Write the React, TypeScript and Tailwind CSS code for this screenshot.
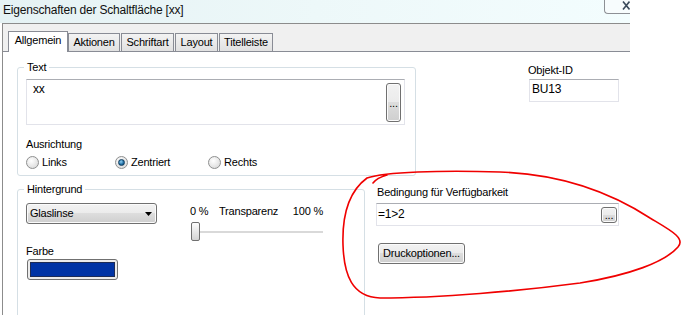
import type { ReactNode } from 'react';

const btn =
  'rounded-[3px] border border-[#707070] bg-[linear-gradient(#f2f2f2_0%,#ebebeb_50%,#dddddd_50%,#cfcfcf_100%)] shadow-[inset_0_0_0_1px_#fbfbfb]';

function Radio({ checked = false }: { checked?: boolean }) {
  return (
    <span className="flex h-[13px] w-[13px] items-center justify-center rounded-full border border-[#8e8f8f] bg-[radial-gradient(circle_at_40%_35%,#ffffff,#dcdcdc_80%)]">
      {checked && (
        <span className="h-[7px] w-[7px] rounded-full border border-[#0f3c5e] bg-[radial-gradient(circle_at_40%_35%,#8fd0f4,#1d6ba0_60%,#0d3f66)]" />
      )}
    </span>
  );
}

function RadioItem({ label, checked, width }: { label: string; checked?: boolean; width: string }) {
  return (
    <div className={`flex items-center gap-[3px] ${width}`}>
      <Radio checked={checked} />
      <span>{label}</span>
    </div>
  );
}

function Tab({ children, active = false, width }: { children: ReactNode; active?: boolean; width: string }) {
  if (active) {
    return (
      <div
        className={`relative -mb-px flex h-[21px] justify-center border border-b-0 border-[#898c95] bg-white pt-[2px] ${width}`}
      >
        {children}
      </div>
    );
  }
  return (
    <div
      className={`mr-[1px] flex h-[18px] justify-center border border-b-0 border-[#898c95] bg-linear-to-b from-[#f3f3f3] to-[#e1e1e1] pt-[2px] ${width}`}
    >
      {children}
    </div>
  );
}

export default function App() {
  return (
    <div className="relative h-[315px] w-[681px] overflow-hidden bg-white font-['Liberation_Sans',Arial,sans-serif] text-[11px] leading-[13px] tracking-[-0.2px] text-black">
      <div className="flex h-full w-[630px] flex-col">
        {/* title bar */}
        <div className="flex h-[23px] shrink-0 items-start bg-linear-to-r from-[#e5f2f4] via-[#edf8f9] to-[#f3fdfe]">
          <span className="pl-[3px] pt-[3px] text-[12px] leading-[14px] text-[#101010]">
            Eigenschaften der Schaltfläche [xx]
          </span>
          <div className="ml-auto flex h-[14px] w-[26px] items-start justify-end overflow-hidden rounded-bl-[4px] border-b border-l border-[#8d9095] bg-[#f7fcfd]">
            <svg width="8" height="9" viewBox="0 0 8 9" className="mt-[1px]">
              <path d="M1 0.5 L7.5 8.5 M7.5 0.5 L1 8.5" stroke="#3b4b5c" strokeWidth="1.6" fill="none" />
            </svg>
          </div>
        </div>

        {/* client area */}
        <div className="ml-[2px] flex min-h-0 flex-1 flex-col border-l border-t border-[#8c8c8c] bg-[#f0f0f0]">
          <div className="flex shrink-0 items-end border-b border-[#898c95] pl-[5px] pt-[7px]">
            <Tab active width="w-[60px]">Allgemein</Tab>
            <Tab width="w-[52px]">Aktionen</Tab>
            <Tab width="w-[53px]">Schriftart</Tab>
            <Tab width="w-[43px]">Layout</Tab>
            <Tab width="w-[54px]">Titelleiste</Tab>
          </div>

          <div className="flex min-h-0 flex-1 flex-col overflow-hidden bg-white pl-[14px] pt-[9px]">
            {/* row 1 */}
            <div className="flex shrink-0 items-start">
              <fieldset className="w-[399px] rounded-[3px] border border-[#d5dfe5] pb-[6px] pl-[8px] pr-[10px] pt-[5px]">
                <legend className="-ml-[2px] px-[3px]">Text</legend>
                <div className="flex h-[46px] border border-[#e2e3ea] border-t-[#abadb3]">
                  <span className="flex-1 pl-[6px] pt-[2px] text-[12px] leading-[15px]">xx</span>
                  <div className={`mb-[2px] mr-[3px] mt-[3px] flex w-[15px] items-center justify-center ${btn}`}>
                    <span className="leading-[8px]">...</span>
                  </div>
                </div>
                <div className="mt-[13px]">Ausrichtung</div>
                <div className="mt-[5px] flex">
                  <RadioItem label="Links" width="w-[89px]" />
                  <RadioItem label="Zentriert" checked width="w-[93px]" />
                  <RadioItem label="Rechts" width="w-[80px]" />
                </div>
              </fieldset>

              <div className="ml-[112px] mt-[3px] flex flex-col">
                <span>Objekt-ID</span>
                <div className="ml-[1px] mt-[2px] h-[23px] w-[90px] border border-[#e2e3ea] border-t-[#abadb3] pl-[2px] text-[12px] leading-[18px]">
                  BU13
                </div>
              </div>
            </div>

            {/* row 2 */}
            <div className="mt-[7px] flex shrink-0 items-start">
              <fieldset className="h-[150px] w-[348px] rounded-[3px] border border-[#d5dfe5] pl-[8px] pt-[7px]">
                <legend className="-ml-[2px] px-[3px]">Hintergrund</legend>
                <div className="flex items-start">
                  <div className="flex w-[131px] flex-col">
                    <div className={`flex h-[21px] items-center justify-between pl-[3px] pr-[4px] ${btn}`}>
                      <span>Glaslinse</span>
                      <svg width="7" height="4" viewBox="0 0 7 4">
                        <path d="M0 0 H7 L3.5 4 Z" fill="#000" />
                      </svg>
                    </div>
                    <span className="mt-[21px]">Farbe</span>
                    <div className="ml-[1px] mt-[1px] h-[21px] w-[91px] rounded-[3px] border border-[#707070] bg-[#ececec] p-[2px]">
                      <div className="h-full border border-[#1d2b55] bg-[#0033a5]" />
                    </div>
                  </div>

                  <div className="ml-[33px] mt-[2px] flex w-[133px] flex-col">
                    <div className="flex">
                      <span className="w-[29px]">0 %</span>
                      <span>Transparenz</span>
                      <span className="ml-auto">100 %</span>
                    </div>
                    <div className="ml-[1px] mt-[4px] flex h-[19px] items-center">
                      <div className="h-[19px] w-[9px] rounded-[2px] border border-[#707070] bg-linear-to-b from-[#fdfdfd] to-[#d4d4d4]" />
                      <div className="h-[2px] flex-1 bg-[#d9d9d9]" />
                    </div>
                  </div>
                </div>
              </fieldset>

              <div className="ml-[11px] mt-[3px] flex w-[243px] flex-col">
                <span className="pl-[1px]">Bedingung für Verfügbarkeit</span>
                <div className="mt-[4px] flex h-[23px] items-center border border-[#e2e3ea] border-t-[#abadb3]">
                  <span className="flex-1 pl-[1px] text-[12px] leading-[15px]">=1&gt;2</span>
                  <div className={`mr-[1px] flex h-[16px] w-[16px] items-end justify-center pb-[3px] ${btn}`}>
                    <span className="leading-[8px]">...</span>
                  </div>
                </div>
                <div className={`ml-[2px] mt-[17px] flex h-[21px] w-[87px] items-center justify-center ${btn}`}>
                  Druckoptionen...
                </div>
              </div>
            </div>
          </div>
        </div>
      </div>

      {/* red hand-drawn annotation */}
      <svg className="pointer-events-none absolute left-0 top-0" width="681" height="315" viewBox="0 0 681 315">
        <path
          d="M367 178 C385 172 440 170 500 172 C560 174 610 192 650 218 C670 230 686 238 678 247 C665 262 630 275 580 283 C520 291 440 298 380 298 C352 297 344 275 343 245 C342 215 348 192 367 178 M373 183 C376 179 380 177 387 175"
          stroke="#f00000"
          strokeWidth="1.6"
          fill="none"
          strokeLinecap="round"
        />
      </svg>
    </div>
  );
}
